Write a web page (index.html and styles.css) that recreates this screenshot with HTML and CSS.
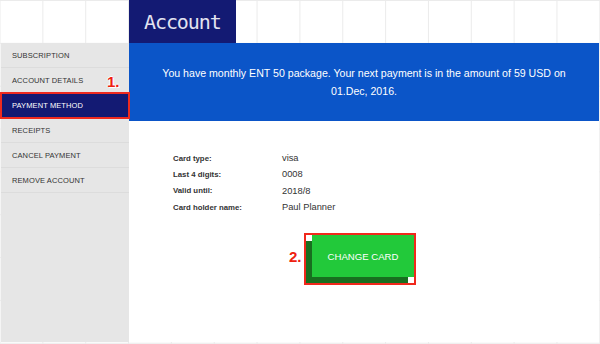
FILE: index.html
```html
<!DOCTYPE html>
<html>
<head>
    <title>Account</title>
    <link rel="stylesheet" href="styles.css">
</head>
<body>
    <div class="page">
        <header class="topbar">
            <div class="title">Account</div>
        </header>

        <div class="main">
            <nav class="sidebar">
                <a class="nav-item">SUBSCRIPTION</a>
                <a class="nav-item">ACCOUNT DETAILS</a>
                <a class="nav-item active">PAYMENT METHOD</a>
                <a class="nav-item">RECEIPTS</a>
                <a class="nav-item">CANCEL PAYMENT</a>
                <a class="nav-item">REMOVE ACCOUNT</a>
                <span class="step step-one">1.</span>
            </nav>

            <section class="panel">
                <div class="banner">
                    <p>You have monthly ENT 50 package. Your next payment is in the amount of 59 USD on 01.Dec, 2016.</p>
                </div>

                <dl class="card-info">
                    <dt>Card type:</dt>
                    <dd>visa</dd>
                    <dt>Last 4 digits:</dt>
                    <dd>0008</dd>
                    <dt>Valid until:</dt>
                    <dd>2018/8</dd>
                    <dt>Card holder name:</dt>
                    <dd>Paul Planner</dd>
                </dl>

                <div class="actions">
                    <div class="btn-frame">
                        <span class="step step-two">2.</span>
                        <button class="change-btn">CHANGE CARD</button>
                    </div>
                </div>
            </section>
        </div>
    </div>
</body>
</html>
```

FILE: styles.css
```css
body {
    margin: 0;
    font-family: "Liberation Sans", Arial, sans-serif;
    color: #333;
    background-color: #fff;
    background-image:
        linear-gradient(to right, #ebebeb 1px, transparent 1px),
        linear-gradient(to bottom, #ebebeb 1px, transparent 1px);
    background-size: 42.857px 42.857px;
    background-position: -0.5px 0;
}
.page {
    width: 600px;
    height: 342px;
    overflow: hidden;
}
.topbar {
    height: 43px;
    padding-left: 129px;
}
.title {
    width: 107px;
    height: 43px;
    box-sizing: border-box;
    padding: 9px 0 0 15px;
    background: #131a73;
    color: #e2e3f0;
    font-family: "DejaVu Sans Mono", monospace;
    font-size: 20px;
    letter-spacing: -1.1px;
    line-height: 26px;
}
.main {
    display: flex;
    height: 299px;
}
.sidebar {
    position: relative;
    width: 128px;
    margin-left: 1px;
    background: #e6e6e6;
    display: flex;
    flex-direction: column;
}
.nav-item {
    display: block;
    height: 25px;
    box-sizing: border-box;
    padding-left: 11px;
    border-bottom: 1px solid #dcdcdc;
    font-size: 7.5px;
    line-height: 25px;
    color: #333;
    letter-spacing: 0.1px;
}
.nav-item.active {
    background: #131a73;
    color: #fff;
    outline: 2px solid #ee2b1f;
    outline-offset: -1px;
    border-bottom-color: #131a73;
}
.step {
    position: absolute;
    color: #ee2010;
    font-weight: bold;
    font-size: 15px;
    text-shadow: 1px 1px 0 #fff, -1px 0 0 #fff, 0 -1px 0 #fff;
}
.step-one {
    left: 106px;
    top: 30px;
}
.panel {
    width: 470px;
    background: #fff;
}
.banner {
    height: 78px;
    background: #0b55c8;
    color: #fff;
    display: flex;
    align-items: center;
    justify-content: center;
    padding: 0 28px;
}
.banner p {
    margin: 0;
    font-size: 10.6px;
    line-height: 18px;
    text-align: center;
}
.card-info {
    display: grid;
    grid-template-columns: 109px auto;
    grid-auto-rows: 16.3px;
    align-items: center;
    margin: 29px 0 0 44px;
}
.card-info dt {
    font-size: 7.8px;
    font-weight: bold;
    color: #333;
}
.card-info dd {
    margin: 0;
    font-size: 9.3px;
    color: #333;
}
.actions {
    margin-top: 18px;
    padding-left: 175px;
}
.btn-frame {
    position: relative;
    width: 108px;
    height: 48px;
    border: 2px solid #f0281c;
    background: #fff;
}
.change-btn {
    display: block;
    width: 102px;
    height: 42px;
    margin-left: 6px;
    border: none;
    background: #22c93a;
    box-shadow: -6px 6px 0 #186f1f;
    color: #fff;
    font-family: "Liberation Sans", Arial, sans-serif;
    font-size: 9.6px;
    padding: 0;
}
.step-two {
    left: -17px;
    top: 13px;
}
```
